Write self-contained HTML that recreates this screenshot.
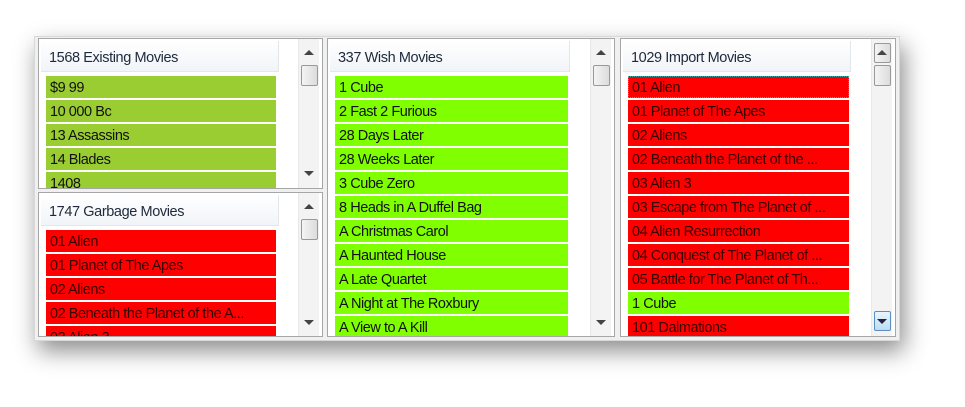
<!DOCTYPE html>
<html><head><style>
body{margin:0;width:965px;height:407px;background:#fff;position:relative;overflow:hidden;font-family:"Liberation Sans",sans-serif;}
.win{position:absolute;left:34px;top:36px;width:864px;height:303px;background:#f0f0f0;box-shadow:4px 10px 22px rgba(0,0,0,.45);border:1px solid #d8d8d8;}
.p{position:absolute;background:#fff;border:1px solid #a6a6a6;overflow:hidden;}
.hd{position:absolute;left:2px;top:2px;height:31px;background:linear-gradient(#fff,#f1f4f8);border-bottom:1px solid #e3e6ea;font-size:14.5px;color:#1e2a3c;line-height:34px;padding-left:8px;box-sizing:border-box;letter-spacing:-.4px}
.hd:after{content:"";position:absolute;right:0;top:0;width:1px;height:31px;background:#e3e6ea}
.r{position:absolute;height:22px;font-size:14.5px;line-height:24px;padding-left:4px;box-sizing:border-box;color:#111;white-space:nowrap;overflow:hidden;letter-spacing:-.45px}
.g1{background:#9acd32}.g2{background:#7fff00}.rd{background:#ff0000;color:#3a0000}
.sb{position:absolute;width:20px;background:#f3f3f3;border-left:1px solid #e8e8e8}
.th{position:absolute;left:2px;width:17px;height:21px;border:1px solid #999;border-radius:2px;background:linear-gradient(90deg,#f4f4f4,#dcdcdc);box-sizing:border-box}
.ar{position:absolute;left:5px;width:0;height:0;border-left:5px solid transparent;border-right:5px solid transparent}
.up{border-bottom:5px solid #444}.dn{border-top:5px solid #444}
</style></head><body>
<div class="win"></div>

<div class="p" style="left:38px;top:38px;width:283px;height:149px">
 <div class="hd" style="width:238px">1568 Existing Movies</div>
 <div class="r g1" style="left:7px;top:37px;width:230px">$9 99</div>
 <div class="r g1" style="left:7px;top:61px;width:230px">10 000 Bc</div>
 <div class="r g1" style="left:7px;top:85px;width:230px">13 Assassins</div>
 <div class="r g1" style="left:7px;top:109px;width:230px">14 Blades</div>
 <div class="r g1" style="left:7px;top:133px;width:230px">1408</div>
 <div class="sb" style="left:259px;top:0;height:149px"><div class="ar up" style="top:11px"></div><div class="th" style="top:26px"></div><div class="ar dn" style="top:132px"></div></div>
</div>

<div class="p" style="left:38px;top:192px;width:283px;height:143px">
 <div class="hd" style="width:238px">1747 Garbage Movies</div>
 <div class="r rd" style="left:7px;top:37px;width:230px">01 Alien</div>
 <div class="r rd" style="left:7px;top:61px;width:230px">01 Planet of The Apes</div>
 <div class="r rd" style="left:7px;top:85px;width:230px">02 Aliens</div>
 <div class="r rd" style="left:7px;top:109px;width:230px">02 Beneath the Planet of the A...</div>
 <div class="r rd" style="left:7px;top:133px;width:230px">03 Alien 3</div>
 <div class="sb" style="left:259px;top:0;height:143px"><div class="ar up" style="top:11px"></div><div class="th" style="top:26px"></div><div class="ar dn" style="top:127px"></div></div>
</div>

<div class="p" style="left:327px;top:38px;width:286px;height:297px">
 <div class="hd" style="width:240px">337 Wish Movies</div>
 <div class="r g2" style="left:7px;top:37px;width:233px">1 Cube</div>
 <div class="r g2" style="left:7px;top:61px;width:233px">2 Fast 2 Furious</div>
 <div class="r g2" style="left:7px;top:85px;width:233px">28 Days Later</div>
 <div class="r g2" style="left:7px;top:109px;width:233px">28 Weeks Later</div>
 <div class="r g2" style="left:7px;top:133px;width:233px">3 Cube Zero</div>
 <div class="r g2" style="left:7px;top:157px;width:233px">8 Heads in A Duffel Bag</div>
 <div class="r g2" style="left:7px;top:181px;width:233px">A Christmas Carol</div>
 <div class="r g2" style="left:7px;top:205px;width:233px">A Haunted House</div>
 <div class="r g2" style="left:7px;top:229px;width:233px">A Late Quartet</div>
 <div class="r g2" style="left:7px;top:253px;width:233px">A Night at The Roxbury</div>
 <div class="r g2" style="left:7px;top:277px;width:233px">A View to A Kill</div>
 <div class="sb" style="left:262px;top:0;height:297px"><div class="ar up" style="top:11px"></div><div class="th" style="top:26px"></div><div class="ar dn" style="top:281px"></div></div>
</div>

<div class="p" style="left:620px;top:38px;width:274px;height:297px">
 <div class="hd" style="width:228px">1029 Import Movies</div>
 <div class="r rd" style="left:7px;top:37px;width:221px;outline:1px dotted #4aa;outline-offset:-1px">01 Alien</div>
 <div class="r rd" style="left:7px;top:61px;width:221px">01 Planet of The Apes</div>
 <div class="r rd" style="left:7px;top:85px;width:221px">02 Aliens</div>
 <div class="r rd" style="left:7px;top:109px;width:221px">02 Beneath the Planet of the ...</div>
 <div class="r rd" style="left:7px;top:133px;width:221px">03 Alien 3</div>
 <div class="r rd" style="left:7px;top:157px;width:221px">03 Escape from The Planet of ...</div>
 <div class="r rd" style="left:7px;top:181px;width:221px">04 Alien Resurrection</div>
 <div class="r rd" style="left:7px;top:205px;width:221px">04 Conquest of The Planet of ...</div>
 <div class="r rd" style="left:7px;top:229px;width:221px">05 Battle for The Planet of Th...</div>
 <div class="r g2" style="left:7px;top:253px;width:221px">1 Cube</div>
 <div class="r rd" style="left:7px;top:277px;width:221px">101 Dalmations</div>
 <div class="sb" style="left:250px;top:0;height:297px">
  <div class="th" style="top:4px;height:20px"></div><div class="ar up" style="top:11px"></div>
  <div class="th" style="top:26px"></div>
  <div class="th" style="top:272px;height:20px;border-color:#5a8fc0;background:linear-gradient(#eaf5fd,#bcdcf4)"></div><div class="ar dn" style="top:280px;border-top-color:#224"></div>
 </div>
</div>
</body></html>
